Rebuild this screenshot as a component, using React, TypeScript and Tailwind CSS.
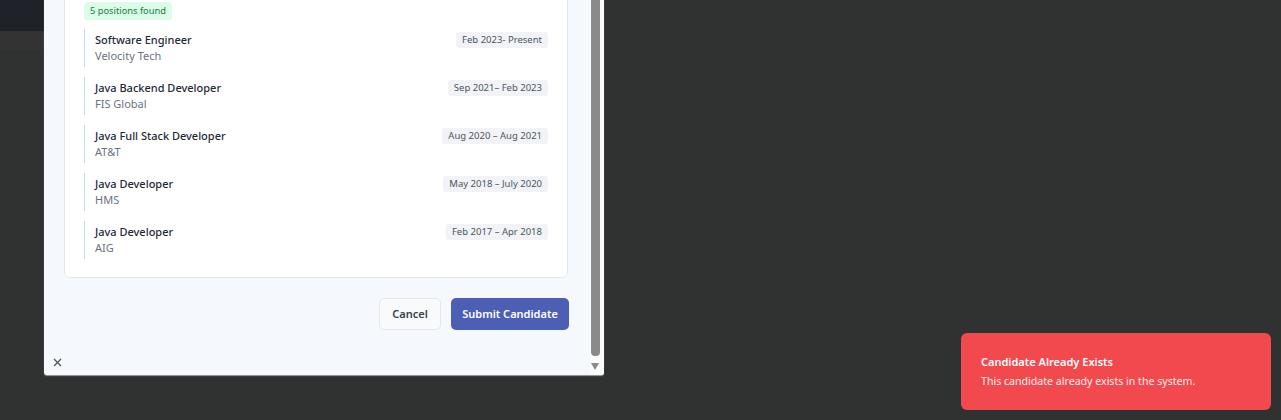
import React from "react";

const positions = [
  { title: "Software Engineer", company: "Velocity Tech", dates: "Feb 2023- Present" },
  { title: "Java Backend Developer", company: "FIS Global", dates: "Sep 2021– Feb 2023" },
  { title: "Java Full Stack Developer", company: "AT&T", dates: "Aug 2020 – Aug 2021" },
  { title: "Java Developer", company: "HMS", dates: "May 2018 – July 2020" },
  { title: "Java Developer", company: "AIG", dates: "Feb 2017 – Apr 2018" },
];

export default function App() {
  return (
    <div
      className="relative h-[420px] w-full overflow-hidden bg-[#303231]"
      style={{ fontFamily: '"Noto Sans", "Open Sans", sans-serif' }}
    >
      {/* background page bits */}
      <div className="h-[31px] w-[60px] bg-[#1f2229]" />
      <div className="h-[19px] w-[60px] bg-[#333333]" />

      {/* modal */}
      <div className="absolute left-[44px] top-[-46px] flex h-[421px] w-[560px] overflow-hidden rounded-b-[3px] bg-[#f5f8fc] shadow-[0_1px_1px_rgba(170,170,170,0.9)]">
        <div className="relative flex-1 pl-[20px] pr-[22px]">
          <div className="mt-[22px] rounded-[6px] border border-[#e2e8f0] bg-white px-[19px] pb-[18px] pt-[19px]">
            <span className="inline-block h-[18px] rounded-[4px] bg-[#dcfce7] px-[6px] text-[9.3px] leading-[18px] text-[#15803d]">
              5 positions found
            </span>
            <div className="mt-[9px] flex flex-col gap-[10px]">
              {positions.map((p, i) => (
                <div
                  key={i}
                  className="flex items-start justify-between border-l border-[#c3d9f5] py-[3px] pl-[10px]"
                >
                  <div className="flex flex-col">
                    <span className="text-[11px] leading-[16px] font-medium text-[#1f2937]">
                      {p.title}
                    </span>
                    <span className="text-[11px] leading-[16px] text-[#6b7280]">{p.company}</span>
                  </div>
                  <span className="h-[16px] rounded-[3px] bg-[#f1f3f6] px-[6px] text-[9.5px] leading-[16px] text-[#4b5563]">
                    {p.dates}
                  </span>
                </div>
              ))}
            </div>
          </div>
          <div className="mt-[20px] flex justify-end gap-[10px] pr-0">
            <button className="h-[32px] w-[62px] rounded-[5px] border border-[#e5e7eb] bg-[#f8fafc] text-[11px] font-semibold text-[#374151]">
              Cancel
            </button>
            <button className="-mr-[1px] h-[32px] w-[118px] rounded-[5px] bg-[#4c5fb5] text-[11px] font-semibold text-white">
              Submit Candidate
            </button>
          </div>
          <svg
            className="absolute bottom-[8px] left-[9px]"
            width="9"
            height="9"
            viewBox="0 0 9 9"
          >
            <path d="M1 1L8 8M8 1L1 8" stroke="#4b5563" strokeWidth="1.3" />
          </svg>
        </div>
        {/* scrollbar */}
        <div className="flex w-[14px] flex-col bg-[#fbfbfb] pl-[1px]">
          <div className="mt-[46px] h-[356px] w-[9px] rounded-b-[4px] bg-[#8a8a8a]" />
          <div className="mt-[7px] h-0 w-0 border-l-[4.5px] border-r-[4.5px] border-t-[7px] border-l-transparent border-r-transparent border-t-[#8a8a8a]" />
        </div>
      </div>

      {/* toast */}
      <div className="absolute left-[961px] top-[333px] flex h-[77px] w-[310px] flex-col justify-center rounded-[6px] bg-[#f2494e] pl-[20px]">
        <span className="text-[11px] font-semibold leading-[18px] text-white">
          Candidate Already Exists
        </span>
        <span className="text-[10.6px] leading-[20px] text-[#fff1f1]">
          This candidate already exists in the system.
        </span>
      </div>
    </div>
  );
}
